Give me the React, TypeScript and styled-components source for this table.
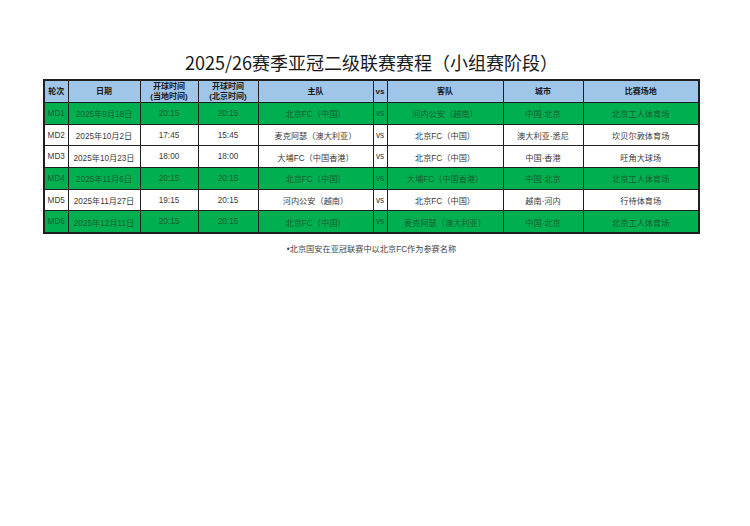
import React from 'react';
import styled, { createGlobalStyle } from 'styled-components';

const GlobalStyle = createGlobalStyle`
  html, body {
    margin: 0;
    padding: 0;
    background: #ffffff;
  }
  body {
    font-family: 'Liberation Sans', 'Noto Sans CJK SC', sans-serif;
  }
`;

const SPage = styled.div`
  width: 750px;
  height: 526px;
  padding: 50px 0 0 44px;
  box-sizing: border-box;
  background: #ffffff;
`;

const SSheet = styled.div`
  width: 655px;
  display: flex;
  flex-direction: column;
  align-items: center;
`;

const STitle = styled.h1`
  margin: 0 0 5px;
  font-family: 'Noto Sans CJK SC', sans-serif;
  font-size: 18px;
  line-height: 24px;
  font-weight: 400;
  color: #1a1a1a;
`;

const STable = styled.table`
  width: 655px;
  border-collapse: collapse;
  table-layout: fixed;
  border: 2px solid #1f1f1f;
`;

const SHeadCell = styled.th`
  height: 21px;
  padding: 0;
  background: #9fc5e8;
  border: 1.5px solid #1f1f1f;
  font-size: 8px;
  line-height: 9.5px;
  font-weight: 700;
  color: #1a1a1a;
  text-align: center;
`;

const SRow = styled.tr<{ $home: boolean }>`
  height: 21.7px;
  background: ${(p) => (p.$home ? '#00b050' : '#ffffff')};
  color: ${(p) => (p.$home ? '#1b5e30' : '#3a3a3a')};
`;

const SCell = styled.td`
  padding: 0;
  border: 1.5px solid #1f1f1f;
  font-size: 8.2px;
  text-align: center;
  white-space: nowrap;
  overflow: hidden;
`;

const SNote = styled.p`
  margin: 8px 0 0;
  font-size: 8.2px;
  color: #444444;
`;

interface Match {
  round: string;
  date: string;
  local: string;
  beijing: string;
  home: string;
  away: string;
  city: string;
  venue: string;
}

const matches: Match[] = [
  { round: 'MD1', date: '2025年9月18日', local: '20:15', beijing: '20:15', home: '北京FC（中国）', away: '河内公安（越南）', city: '中国·北京', venue: '北京工人体育场' },
  { round: 'MD2', date: '2025年10月2日', local: '17:45', beijing: '15:45', home: '麦克阿瑟（澳大利亚）', away: '北京FC（中国）', city: '澳大利亚·悉尼', venue: '坎贝尔敦体育场' },
  { round: 'MD3', date: '2025年10月23日', local: '18:00', beijing: '18:00', home: '大埔FC（中国香港）', away: '北京FC（中国）', city: '中国·香港', venue: '旺角大球场' },
  { round: 'MD4', date: '2025年11月6日', local: '20:15', beijing: '20:15', home: '北京FC（中国）', away: '大埔FC（中国香港）', city: '中国·北京', venue: '北京工人体育场' },
  { round: 'MD5', date: '2025年11月27日', local: '19:15', beijing: '20:15', home: '河内公安（越南）', away: '北京FC（中国）', city: '越南·河内', venue: '行待体育场' },
  { round: 'MD6', date: '2025年12月11日', local: '20:15', beijing: '20:15', home: '北京FC（中国）', away: '麦克阿瑟（澳大利亚）', city: '中国·北京', venue: '北京工人体育场' },
];

const widths = [24, 72, 58, 60, 115, 14, 116, 80, 116];

export default function App() {
  return (
    <>
      <GlobalStyle />
      <SPage>
        <SSheet>
          <STitle>2025/26赛季亚冠二级联赛赛程（小组赛阶段）</STitle>
          <STable>
            <colgroup>
              {widths.map((w, i) => (
                <col key={i} style={{ width: w }} />
              ))}
            </colgroup>
            <thead>
              <tr>
                <SHeadCell>轮次</SHeadCell>
                <SHeadCell>日期</SHeadCell>
                <SHeadCell>
                  开球时间
                  <br />
                  (当地时间)
                </SHeadCell>
                <SHeadCell>
                  开球时间
                  <br />
                  (北京时间)
                </SHeadCell>
                <SHeadCell>主队</SHeadCell>
                <SHeadCell>vs</SHeadCell>
                <SHeadCell>客队</SHeadCell>
                <SHeadCell>城市</SHeadCell>
                <SHeadCell>比赛场地</SHeadCell>
              </tr>
            </thead>
            <tbody>
              {matches.map((m) => (
                <SRow key={m.round} $home={m.city === '中国·北京'}>
                  <SCell>{m.round}</SCell>
                  <SCell>{m.date}</SCell>
                  <SCell>{m.local}</SCell>
                  <SCell>{m.beijing}</SCell>
                  <SCell>{m.home}</SCell>
                  <SCell>vs</SCell>
                  <SCell>{m.away}</SCell>
                  <SCell>{m.city}</SCell>
                  <SCell>{m.venue}</SCell>
                </SRow>
              ))}
            </tbody>
          </STable>
          <SNote>•北京国安在亚冠联赛中以北京FC作为参赛名称</SNote>
        </SSheet>
      </SPage>
    </>
  );
}
